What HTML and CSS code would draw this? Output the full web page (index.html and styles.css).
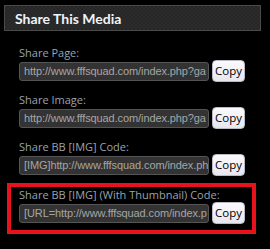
FILE: index.html
```html
<!DOCTYPE html>
<html>
<head>
<meta charset="utf-8">
<link rel="stylesheet" href="styles.css">
</head>
<body>
<div class="panel">
  <div class="header"><span class="title">Share This Media</span></div>
  <div class="rows">
    <div class="row">
      <div class="label">Share Page:</div>
      <div class="field">
        <div class="input">http://www.fffsquad.com/index.php?ga</div>
        <button class="copy">Copy</button>
      </div>
    </div>
    <div class="row">
      <div class="label">Share Image:</div>
      <div class="field">
        <div class="input">http://www.fffsquad.com/index.php?ga</div>
        <button class="copy">Copy</button>
      </div>
    </div>
    <div class="row">
      <div class="label">Share BB [IMG] Code:</div>
      <div class="field">
        <div class="input">[IMG]http://www.fffsquad.com/index.ph</div>
        <button class="copy">Copy</button>
      </div>
    </div>
    <div class="row highlight">
      <div class="label">Share BB [IMG] (With Thumbnail) Code:</div>
      <div class="field">
        <div class="input">[URL=http://www.fffsquad.com/index.p</div>
        <button class="copy">Copy</button>
      </div>
    </div>
  </div>
</div>
</body>
</html>
```

FILE: styles.css
```css
html, body {
  margin: 0;
  padding: 0;
  background: #000;
}
body {
  width: 270px;
  height: 249px;
  overflow: hidden;
}
.panel {
  padding-top: 5px;
}
.header {
  margin-left: 4px;
  height: 24px;
  border: 1px solid #4a4a4a;
  background-color: #2c2c2c;
  background-image:
    linear-gradient(45deg, #262626 25%, transparent 25%, transparent 75%, #262626 75%),
    linear-gradient(45deg, #262626 25%, transparent 25%, transparent 75%, #262626 75%);
  background-size: 4px 4px;
  background-position: 0 0, 2px 2px;
  display: flex;
  align-items: center;
  padding-left: 10px;
  box-sizing: content-box;
  width: 245px;
}
.title {
  font-family: Lato, "Liberation Sans", sans-serif;
  font-weight: bold;
  font-size: 14px;
  color: #eef3fb;
}
.rows {
  padding-top: 14px;
}
.row {
  padding-left: 19px;
  margin-bottom: 10px;
}
.label {
  font-family: "Open Sans", sans-serif;
  font-size: 11px;
  line-height: 15px;
  height: 15px;
  color: #9ba3ad;
  white-space: nowrap;
}
.field {
  display: flex;
  align-items: center;
  gap: 3px;
  height: 22px;
}
.input {
  box-sizing: border-box;
  width: 190px;
  flex: none;
  height: 19px;
  border: 1px solid #555;
  border-radius: 3px;
  background: #333;
  color: #a6a6a6;
  font-family: "Liberation Sans", sans-serif;
  font-size: 11px;
  letter-spacing: -0.1px;
  line-height: 17px;
  padding-left: 4px;
  white-space: nowrap;
  overflow: hidden;
}
.copy {
  box-sizing: border-box;
  flex: none;
  width: 33px;
  height: 22px;
  margin: 0;
  padding: 0;
  border: 1px solid #b9b9c4;
  border-radius: 4px;
  background: linear-gradient(#fbfbfe, #e6e6ef);
  color: #000;
  font-family: "Open Sans", sans-serif;
  font-size: 11.5px;
  line-height: 20px;
}
.highlight {
  margin-top: -3px;
  margin-left: 7px;
  width: 233px;
  border: 4px solid #e8121c;
  padding-left: 8px;
  padding-right: 0;
  padding-bottom: 6px;
}
```
